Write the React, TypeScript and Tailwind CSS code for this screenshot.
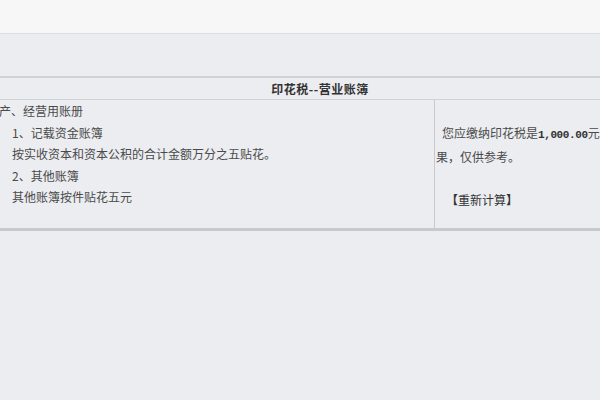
const font = { fontFamily: '"Noto Sans CJK SC", "Noto Sans", sans-serif' };

const leftLines = [
  { text: "产、经营用账册", indent: "pl-[39px]" },
  { text: "1、记载资金账簿", indent: "pl-[52px]" },
  { text: "按实收资本和资本公积的合计金额万分之五贴花。", indent: "pl-[52px]" },
  { text: "2、其他账簿", indent: "pl-[52px]" },
  { text: "其他账簿按件贴花五元", indent: "pl-[52px]" },
];

const App = () => {
  return (
    <div
      className="w-[600px] h-[400px] overflow-hidden bg-[#ecedf1] text-[12px] text-[#4a4a4a]"
      style={font}
    >
      <div className="h-[34px] bg-[#f7f7f7] border-b border-[#dcdde1]" />
      <div className="h-[42px]" />

      <div className="-ml-[40px] w-[720px]">
        <div className="h-[24px] border-t-2 border-b border-[#d0d1d5] flex items-center justify-center">
          <span className="font-bold text-[#333] tracking-[0.5px]">印花税--营业账簿</span>
        </div>

        <div className="flex border-b-[3px] border-[#c8c9cd]">
          <div className="w-[475px] shrink-0 h-[128px] border-r border-[#c8c9cc]">
            {leftLines.map((l) => (
              <div key={l.text} className={`${l.indent} leading-[21.5px] whitespace-nowrap`}>
                {l.text}
              </div>
            ))}
          </div>
          <div className="flex-1 h-[128px] whitespace-nowrap">
            <div className="h-[21.5px]" />
            <div className="pl-[7px] leading-[21.5px]">
              您应缴纳印花税是
              <span
                className="font-bold text-[11px] tracking-[-0.4px] text-[#333]"
                style={{ fontFamily: '"Liberation Mono", monospace' }}
              >
                1,000.00
              </span>
              元
            </div>
            <div className="pl-[1px] leading-[21.5px]">果，仅供参考。</div>
            <div className="h-[21.5px]" />
            <div className="pl-[11px] leading-[21.5px] text-[#333]">
              <span className="font-bold">【</span>重新计算<span className="font-bold">】</span>
            </div>
          </div>
        </div>
      </div>
    </div>
  );
};

export default App;
